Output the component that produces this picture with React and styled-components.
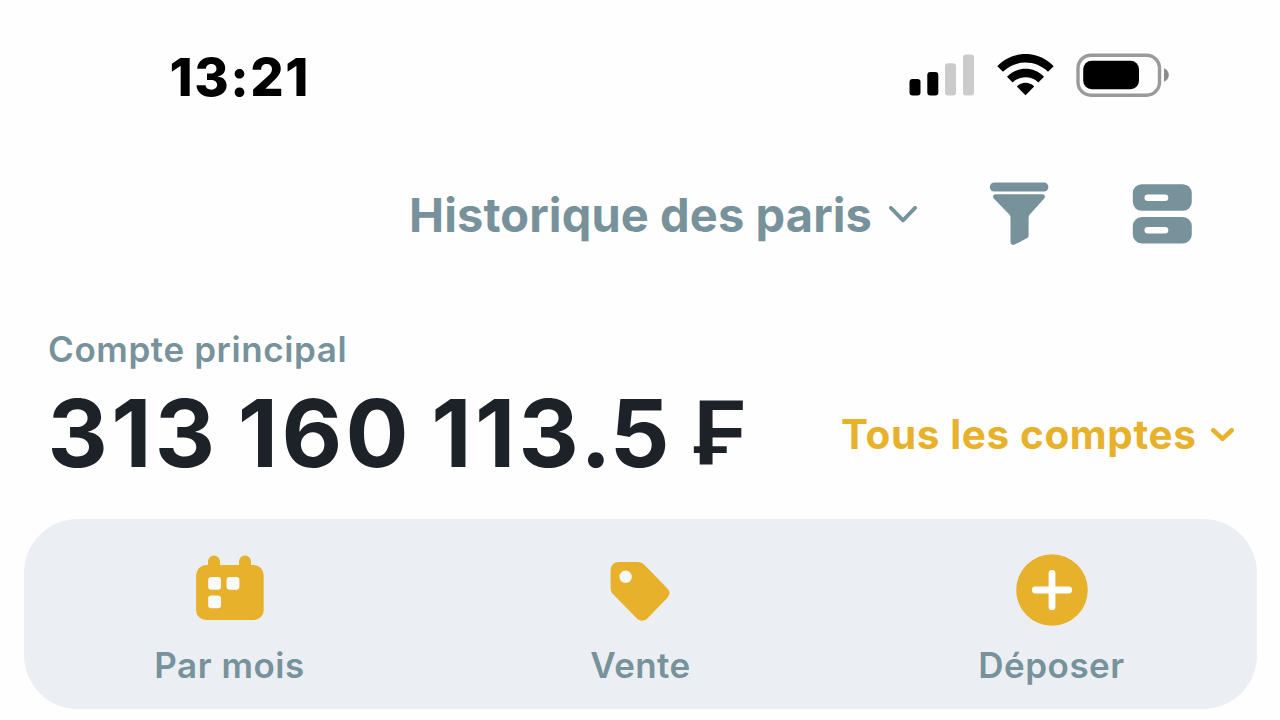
import React from "react";
import styled, { createGlobalStyle } from "styled-components";

const slate = "#78929b";
const gold = "#e7b12b";
const ink = "#1d2229";

const GlobalStyle = createGlobalStyle`
  * { box-sizing: border-box; }
  body { margin: 0; background: #fefefe; font-family: Inter, "Liberation Sans", sans-serif; }
  svg { display: block; flex: none; }
`;

const Screen = styled.main`
  width: 1280px;
  height: 720px;
  overflow: hidden;
  display: flex;
  flex-direction: column;
  background: #fefefe;
`;

const Label = styled.span`
  flex: none;
  white-space: pre;
  font-size: ${(p) => p.$size}px;
  font-weight: ${(p) => p.$weight};
  line-height: ${(p) => p.$line || 40}px;
  letter-spacing: ${(p) => p.$track || 0}px;
  color: ${(p) => p.$color || slate};
`;

const StatusBar = styled.header`
  height: 150px;
  padding: 0 111px 0 169.5px;
  display: flex;
  align-items: center;
  justify-content: space-between;
`;

const Clock = styled(Label)`
  padding-top: 3px;
`;

const StatusIcons = styled.div`
  display: flex;
  align-items: center;
  gap: 22px;
`;

const Toolbar = styled.nav`
  height: 127px;
  padding-left: 409px;
  display: flex;
  align-items: center;
`;

const HistoryPicker = styled.div`
  width: 580px;
  display: flex;
  align-items: center;
  justify-content: space-between;
  padding: 2px 72px 0 0;
`;

const ToolbarIcons = styled.div`
  display: flex;
  align-items: center;
  gap: 83px;
`;

const Account = styled.section`
  height: 241.5px;
  padding: 51.5px 46px 0 48px;
  display: flex;
  flex-direction: column;
`;

const BalanceRow = styled.div`
  height: 100px;
  margin-top: 14px;
  display: flex;
  align-items: center;
  justify-content: space-between;
`;

const Balance = styled.div`
  display: flex;
  align-items: center;
`;

const Amount = styled(Label)`
  margin-left: -0.5px;
  word-spacing: -6px;
`;

const Fraction = styled.span`
  margin-left: -2px;
  letter-spacing: -1px;
`;

const Currency = styled(Label)`
  font-family: "Liberation Sans", sans-serif;
  margin-left: 25px;
`;

const AccountsPicker = styled.div`
  display: flex;
  align-items: center;
  gap: 14.5px;
  padding-top: 4px;
`;

const Actions = styled.section`
  width: 1233px;
  height: 190.5px;
  margin-left: 24px;
  display: grid;
  grid-template-columns: repeat(3, 411px);
  border-radius: 54px;
  background: #ebeff4;
`;

const Action = styled.div`
  display: flex;
  flex-direction: column;
  align-items: center;
  padding-top: 34.5px;
  gap: 17.5px;
`;

const Signal = () => (
  <svg width="66" height="42" viewBox="0 0 66 42">
    <rect x="0.5" y="25" width="11" height="16.5" rx="3" fill="#000" />
    <rect x="18.3" y="18" width="11" height="23.5" rx="3" fill="#000" />
    <rect x="36" y="9.3" width="11" height="32.2" rx="3" fill="#cbcbcb" />
    <rect x="54" y="0.6" width="11" height="40.9" rx="3" fill="#cbcbcb" />
  </svg>
);

const Wifi = () => (
  <svg width="57" height="42" viewBox="0 0 57 42">
    <path d="M0.3 12.2 C16-4.2 41-4.2 56.7 12.2 L51 17.8 C38.5 5.4 18.5 5.4 6 17.8Z" />
    <path d="M10 22.7 C20.3 12.2 36.7 12.2 47 22.7 L41.3 28.4 C34.3 21.6 22.7 21.6 15.7 28.4Z" />
    <path d="M19.8 32.4 C24.6 27.6 32.4 27.6 37.2 32.4 L28.5 41.2Z" />
  </svg>
);

const Battery = () => (
  <svg width="93" height="44" viewBox="0 0 93 44">
    <rect x="2" y="2.2" width="81.5" height="40" rx="13" fill="none" stroke="#9a9a9a" strokeWidth="3.4" />
    <rect x="7.2" y="7.7" width="55.8" height="28.6" rx="8.5" fill="#000" />
    <path d="M88 15.2 C94.4 17.6 94.4 26.4 88 28.8Z" fill="#8c8c8c" />
  </svg>
);

const Chevron = ({ width, height, color, stroke }) => (
  <svg width={width} height={height} viewBox={`0 0 ${width} ${height}`}>
    <path
      d={`M${stroke / 2} ${stroke / 2} L${width / 2} ${height - stroke / 2 - 0.8} L${width - stroke / 2} ${stroke / 2}`}
      fill="none"
      stroke={color}
      strokeWidth={stroke}
      strokeLinecap="round"
      strokeLinejoin="round"
    />
  </svg>
);

const Funnel = () => (
  <svg width="60" height="64" viewBox="0 0 60 64" fill={slate}>
    <rect x="0.8" y="0.4" width="58.6" height="9.2" rx="4.6" />
    <path d="M6.5 12.2 H53.5 C55.8 12.2 56.8 14.8 55.2 16.4 L40.8 32.4 C40 33.3 39.6 34.3 39.6 35.5 V53.6 C39.6 54.7 39.2 55.5 38.2 56.1 L25.6 62.6 C23.7 63.6 21.5 62.4 21.5 60.3 V35.5 C21.5 34.3 21.2 33.3 20.3 32.4 L4.8 16.4 C3.2 14.8 4.2 12.2 6.5 12.2Z" />
  </svg>
);

const Drawers = () => (
  <svg width="60" height="60" viewBox="0 0 60 60">
    <rect x="0.8" y="0.2" width="59" height="26.6" rx="9" fill={slate} />
    <rect x="0.8" y="33" width="59" height="26.4" rx="9" fill={slate} />
    <rect x="12.5" y="10.5" width="23.8" height="6.5" rx="3.2" fill="#fefefe" />
    <rect x="12.5" y="43" width="23.8" height="6.5" rx="3.2" fill="#fefefe" />
  </svg>
);

const Calendar = () => (
  <svg width="72" height="74" viewBox="0 0 72 74">
    <path
      d="M14 12.5 V8.5 A6 6 0 0 1 26 8.5 V12 H45 V8.5 A6 6 0 0 1 57 8.5 V12 H59.5 A10.2 10.2 0 0 1 69.7 22.2 V57.4 A9.5 9.5 0 0 1 60.2 66.9 H11.6 A9.5 9.5 0 0 1 2.1 57.4 V22.2 A10.2 10.2 0 0 1 12.3 12 H14Z"
      fill={gold}
    />
    <rect x="14.2" y="24" width="12.8" height="12.8" rx="3" fill="#f9fafb" />
    <rect x="32.6" y="24" width="12.8" height="12.8" rx="3" fill="#f9fafb" />
    <rect x="14.2" y="42.4" width="12.8" height="12.8" rx="3" fill="#f9fafb" />
  </svg>
);

const Tag = () => (
  <svg width="72" height="74" viewBox="1 -0.5 72 74">
    <path
      d="M15.5 8.5 H33.5 C36.2 8.5 38.4 9.4 40.3 11.3 L62.7 34.2 C66.4 37.9 66.4 41.2 62.7 44.9 L43.8 64.4 C40.2 68.1 36 68.1 32.4 64.4 L9.2 40.8 C7.4 39 6.6 37 6.6 34.5 V17.5 C6.6 11.8 9.8 8.5 15.5 8.5Z"
      fill={gold}
    />
    <circle cx="21.6" cy="23.3" r="6.2" fill="#f5f7f9" />
  </svg>
);

const PlusCircle = () => (
  <svg width="72" height="74" viewBox="0 0 72 74">
    <circle cx="36" cy="37" r="35.8" fill={gold} />
    <path d="M36 20.3 V53.7 M19.3 37 H52.7" stroke="#fff" strokeWidth="6.8" strokeLinecap="round" />
  </svg>
);

export default function App() {
  return (
    <Screen>
      <GlobalStyle />
      <StatusBar>
        <Clock $size={52.5} $weight={790} $track={1.5} $color="#000">13:21</Clock>
        <StatusIcons>
          <Signal />
          <Wifi />
          <Battery />
        </StatusIcons>
      </StatusBar>
      <Toolbar>
        <HistoryPicker>
          <Label $size={47} $weight={660} $track={0.1}>Historique des paris</Label>
          <Chevron width={28} height={17} stroke={3.8} color={slate} />
        </HistoryPicker>
        <ToolbarIcons>
          <Funnel />
          <Drawers />
        </ToolbarIcons>
      </Toolbar>
      <Account>
        <Label $size={35} $weight={580} $track={0.6}>Compte principal</Label>
        <BalanceRow>
          <Balance>
            <Amount $size={93.5} $weight={720} $track={3.3} $line={100} $color={ink}>
              313 160 113<Fraction>.5</Fraction>
            </Amount>
            <Currency $size={92.5} $weight={700} $line={100} $color={ink}>₣</Currency>
          </Balance>
          <AccountsPicker>
            <Label $size={40.4} $weight={670} $track={0.65} $color={gold}>Tous les comptes</Label>
            <Chevron width={23} height={14} stroke={4.6} color={gold} />
          </AccountsPicker>
        </BalanceRow>
      </Account>
      <Actions>
        <Action>
          <Calendar />
          <Label $size={35} $weight={580} $track={0.5}>Par mois</Label>
        </Action>
        <Action>
          <Tag />
          <Label $size={35} $weight={580} $track={0.4}>Vente</Label>
        </Action>
        <Action>
          <PlusCircle />
          <Label $size={35} $weight={580} $track={0.5}>Déposer</Label>
        </Action>
      </Actions>
    </Screen>
  );
}
